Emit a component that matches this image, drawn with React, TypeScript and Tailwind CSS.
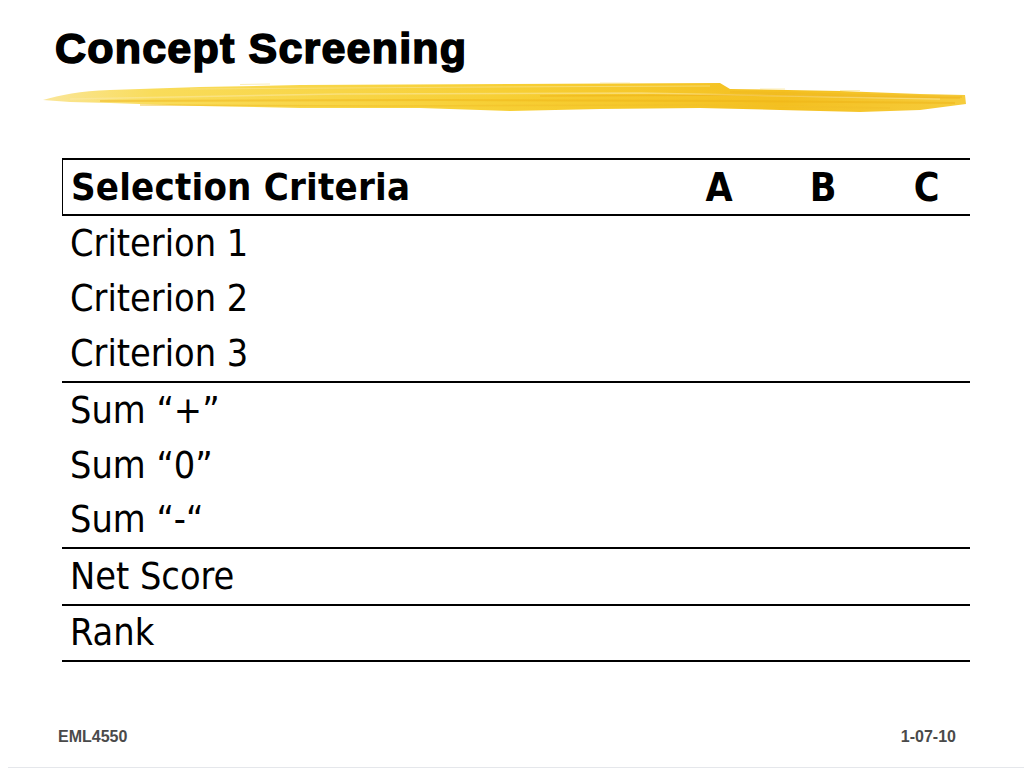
import React from "react";

const body = { fontFamily: '"DejaVu Sans Condensed", "DejaVu Sans", sans-serif', fontStretch: "condensed" as const };

function Brush() {
  return (
    <svg width="930" height="36" viewBox="0 0 930 36" className="block">
      <defs>
        <linearGradient id="bg" x1="0" y1="0" x2="1" y2="0">
          <stop offset="0" stopColor="#fae69a" />
          <stop offset="0.12" stopColor="#f9dc5a" />
          <stop offset="0.5" stopColor="#f7cf34" />
          <stop offset="0.8" stopColor="#f4c020" />
          <stop offset="1" stopColor="#f6cc3c" />
        </linearGradient>
      </defs>
      <path
        d="M3 20 C 20 15, 40 11, 70 10 L 160 7 L 260 5 L 470 4 L 680 3 L 690 9 L 800 11 L 880 14 L 925 15 L 926 24 L 880 30 L 820 32 L 740 30 L 660 28 L 560 29 L 470 31 L 380 28 L 260 28 L 160 26 L 70 23 L 30 22 Z"
        fill="url(#bg)"
      />
      <path d="M30 19 L 300 14 L 600 13 L 900 19" stroke="#fce9a6" strokeWidth="1.5" fill="none" opacity="0.55" />
      <path d="M60 21 L 400 20 L 700 21 L 915 23" stroke="#eeb214" strokeWidth="2" fill="none" opacity="0.45" />
      <path d="M150 9 L 450 7 L 670 6" stroke="#fae28a" strokeWidth="1" fill="none" opacity="0.7" />
      <path d="M500 16 L 700 15 L 920 18" stroke="#eaa80e" strokeWidth="1.5" fill="none" opacity="0.4" />
      <path d="M690 12 L 880 16 L 922 17" stroke="#f0b820" strokeWidth="2" fill="none" opacity="0.5" />
      <path d="M100 25 L 350 26 L 650 25 L 850 28" stroke="#f2c02a" strokeWidth="1.5" fill="none" opacity="0.6" />
      <path d="M200 4.5 L 230 4 M 560 3 L 590 3 M 720 9 L 745 9 M 800 10.5 L 820 10.5" stroke="#f8dc70" strokeWidth="1" fill="none" opacity="0.5" />
    </svg>
  );
}

function Row({ label, h = "h-[55px]", border = false }: { label: string; h?: string; border?: boolean }) {
  return (
    <div className={`flex items-center ${h} ${border ? "border-b-2 border-black" : ""}`}>
      <div className="pl-[8px] text-[37.5px] leading-none text-black" style={body}>
        {label}
      </div>
    </div>
  );
}

export default function App() {
  return (
    <div className="w-[1024px] h-[768px] bg-white flex flex-col overflow-hidden">
      <div
        className="mt-[27px] ml-[55px] h-[43px] text-[43px] leading-none font-bold tracking-[1.2px] text-black [-webkit-text-stroke:1.6px_black]"
        style={{ fontFamily: '"Liberation Sans", Arial, sans-serif' }}
      >
        Concept Screening
      </div>
      <div className="mt-[10px] ml-[40px]">
        <Brush />
      </div>
      <div className="mt-[42px] ml-[62px] w-[908px]">
        <div className="flex items-center h-[58px] border-t-2 border-b-2 border-l border-black">
          <div className="flex-1 pl-[8px] text-[38px] leading-none font-bold tracking-[0.2px] text-black" style={body}>
            Selection Criteria
          </div>
          <div className="w-[104px] flex justify-center text-[39px] leading-none font-bold" style={body}>A</div>
          <div className="w-[104px] flex justify-center text-[39px] leading-none font-bold" style={body}>B</div>
          <div className="w-[95px] flex justify-center pl-[8px] text-[39px] leading-none font-bold" style={body}>C</div>
        </div>
        <Row label="Criterion 1" />
        <Row label="Criterion 2" />
        <Row label="Criterion 3" h="h-[57px]" border />
        <Row label="Sum “+”" />
        <Row label="Sum “0”" />
        <Row label="Sum “-“" h="h-[56px]" border />
        <Row label="Net Score" h="h-[57px]" border />
        <Row label="Rank" h="h-[56px]" border />
      </div>
      <div className="mt-auto border-b border-gray-200 ml-[8px]">
        <div
          className="flex justify-between pl-[50px] pr-[68px] pb-[22px] text-[16px] leading-none font-bold text-[#4a4a4a]"
          style={{ fontFamily: '"Liberation Sans", Arial, sans-serif' }}
        >
          <span>EML4550</span>
          <span>1-07-10</span>
        </div>
      </div>
    </div>
  );
}
